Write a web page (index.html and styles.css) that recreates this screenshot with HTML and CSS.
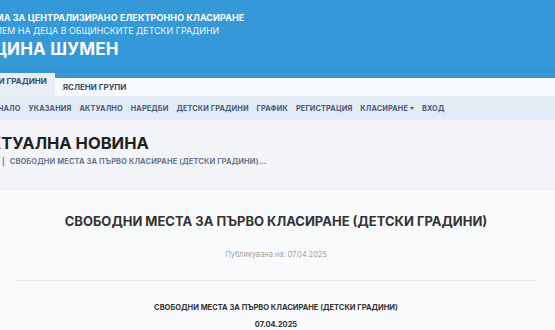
FILE: index.html
```html
<!DOCTYPE html>
<html lang="bg">
<head>
  <meta charset="UTF-8" />
  <meta name="viewport" content="width=device-width, initial-scale=1.0" />
  <title>Актуална новина</title>
  <link rel="stylesheet" href="styles.css">
</head>
<body>
  <header class="top">
    <div class="sys">СИСТЕМА ЗА ЦЕНТРАЛИЗИРАНО ЕЛЕКТРОННО КЛАСИРАНЕ</div>
    <div class="sub">ПРИЕМ НА ДЕЦА В ОБЩИНСКИТЕ ДЕТСКИ ГРАДИНИ</div>
    <div class="city">ОБЩИНА ШУМЕН</div>
  </header>

  <div class="tabs">
    <a class="tab active">ДЕТСКИ ГРАДИНИ</a>
    <a class="tab">ЯСЛЕНИ ГРУПИ</a>
  </div>

  <nav class="menu">
    <a>НАЧАЛО</a>
    <a>УКАЗАНИЯ</a>
    <a>АКТУАЛНО</a>
    <a>НАРЕДБИ</a>
    <a>ДЕТСКИ ГРАДИНИ</a>
    <a>ГРАФИК</a>
    <a>РЕГИСТРАЦИЯ</a>
    <a class="drop">КЛАСИРАНЕ<span class="caret"></span></a>
    <a>ВХОД</a>
  </nav>

  <section class="page-head">
    <h1>АКТУАЛНА НОВИНА</h1>
    <div class="crumbs">НАЧАЛО <span class="sep">|</span> СВОБОДНИ МЕСТА ЗА ПЪРВО КЛАСИРАНЕ (ДЕТСКИ ГРАДИНИ)...</div>
  </section>

  <main class="card">
    <h2>СВОБОДНИ МЕСТА ЗА ПЪРВО КЛАСИРАНЕ (ДЕТСКИ ГРАДИНИ)</h2>
    <p class="date">Публикувана на: 07.04.2025</p>
    <hr />
    <p class="body-title">СВОБОДНИ МЕСТА ЗА ПЪРВО КЛАСИРАНЕ (ДЕТСКИ ГРАДИНИ)</p>
    <p class="body-date">07.04.2025</p>
  </main>
</body>
</html>
```

FILE: styles.css
```css
body {
  margin: 0;
  font-family: Inter, "DejaVu Sans", sans-serif;
  background: #f9fafc;
  color: #333;
  overflow-x: hidden;
}
a {
  text-decoration: none;
  color: inherit;
}

/* Горна синя лента (страницата е изрязана отляво) */
.top {
  background: #3598d8;
  height: 78px;
  box-sizing: border-box;
  padding-top: 11px;
  border-bottom: 10px solid #3696d5;
  white-space: nowrap;
}
.sys {
  color: #fff;
  font-size: 9px;
  font-weight: 700;
  line-height: 13px;
  margin-left: -37px;
  letter-spacing: 0.1px;
}
.sub {
  color: #eaf4fb;
  font-size: 8.9px;
  font-weight: 400;
  line-height: 13px;
  margin-left: -17px;
}
.city {
  color: #fff;
  font-size: 17px;
  font-weight: 700;
  line-height: 23px;
  margin-top: 1px;
  margin-left: -35px;
  letter-spacing: 0.2px;
}

/* Табове */
.tabs {
  display: flex;
  align-items: flex-end;
  height: 18px;
  background: #f7fbff;
  margin-left: -38px;
}
.tab {
  font-size: 8px;
  font-weight: 700;
  color: #3c4a63;
  padding: 0 8px;
  line-height: 18px;
}
.tab.active {
  background: #e7eef6;
  margin-top: -5px;
  line-height: 16px;
  padding-bottom: 7px;
}

/* Главно меню */
.menu {
  display: flex;
  align-items: center;
  gap: 8px;
  height: 24px;
  background: #e3ebf5;
  margin-left: -13px;
  white-space: nowrap;
}
.menu a {
  font-size: 7.3px;
  font-weight: 700;
  color: #4b5a76;
  letter-spacing: 0.15px;
}
.caret {
  display: inline-block;
  margin-left: 2px;
  vertical-align: middle;
  border-left: 2.5px solid transparent;
  border-right: 2.5px solid transparent;
  border-top: 3px solid #4b5a76;
}

/* Заглавие на страницата */
.page-head {
  background: #f4f5f8;
  height: 70px;
  box-sizing: border-box;
  padding-top: 12px;
  border-bottom: 2px solid #eff1f5;
  white-space: nowrap;
}
h1 {
  margin: 0 0 0 -23px;
  font-size: 16.5px;
  font-weight: 700;
  color: #222;
  line-height: 22px;
}
.crumbs {
  margin: 3px 0 0 -37px;
  font-size: 7.5px;
  font-weight: 700;
  color: #6b7790;
  letter-spacing: 0.1px;
}
.sep {
  margin: 0 3px;
}

/* Новината */
.card {
  text-align: center;
  padding: 23px 19px 0 16px;
}
h2 {
  margin: 0;
  font-size: 13px;
  font-weight: 700;
  color: #333;
  line-height: 16px;
}
.date {
  margin: 21px 0 0;
  font-size: 7.5px;
  font-weight: 300;
  color: #888;
}
hr {
  border: 0;
  border-top: 1px solid #e4e6ea;
  margin: 21px 0 0;
}
.body-title {
  margin: 22px 0 0;
  font-size: 7.5px;
  font-weight: 700;
  color: #333;
}
.body-date {
  margin: 8px 0 0;
  font-size: 7.5px;
  font-weight: 300;
  font-weight: 700;
  color: #333;
}
```
